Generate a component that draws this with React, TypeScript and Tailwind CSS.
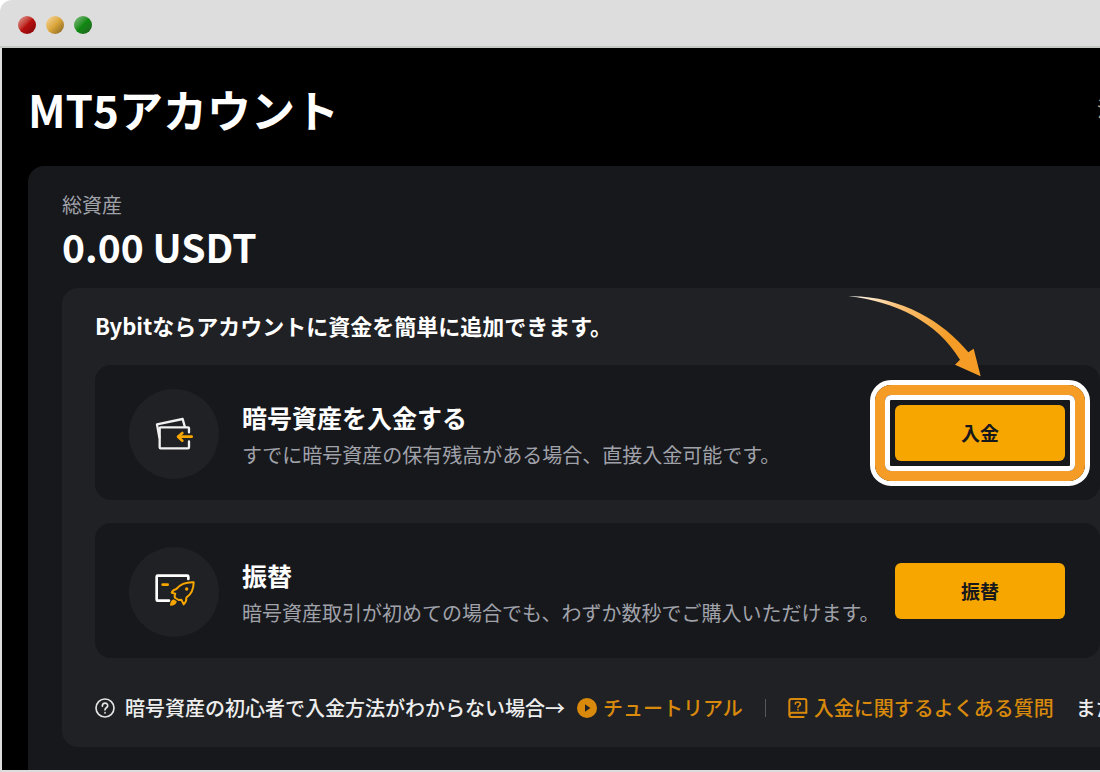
import type { ReactNode } from "react";

function WalletIcon() {
  return (
    <svg viewBox="27 27 270 270" className="size-full" fill="none" strokeLinecap="round" strokeLinejoin="round" aria-hidden="true">
      <path d="M207 157V145q0-3-3-3H122q-3 0-3 3V202q0 3 3 3H204q3 0 3-3V184" stroke="#f1f1f1" strokeWidth="7" />
      <path d="M118 172L111 133L188 117L194 139" stroke="#f1f1f1" strokeWidth="7" />
      <path d="M215 170H176" stroke="#f7a600" strokeWidth="8" />
      <path d="M187 159L174 170L187 182" stroke="#f7a600" strokeWidth="8" />
    </svg>
  );
}

function RocketIcon() {
  return (
    <svg viewBox="27 21 270 270" className="size-full" fill="none" strokeLinecap="round" strokeLinejoin="round" aria-hidden="true">
      <path d="M205 117V110q0-3-3-3H113q-3 0-3 3V179q0 3 3 3H147" stroke="#ffffff" strokeWidth="8" />
      <path d="M128 134H143" stroke="#f7a600" strokeWidth="8" />
      <path d="M221 127C199 126 180 134 169 147C161 149 157 153 155 158L166 161C163 167 163 171 166 174L176 180L184 179L191 193C197 187 200 181 199 173C214 163 221 148 221 127Z" stroke="#f7a600" strokeWidth="6" />
      <circle cx="200" cy="147" r="5" fill="#f7a600" />
      <path d="M160 180C152 184 154 188 152 195C160 195 166 191 168 185Z" fill="#f7a600" stroke="#f7a600" strokeWidth="4" />
    </svg>
  );
}

function QuestionIcon() {
  return (
    <svg viewBox="0 0 60 60" className="size-5 shrink-0" fill="none" stroke="#e4e4e4" strokeLinecap="round" aria-hidden="true">
      <circle cx="30" cy="30" r="27" strokeWidth="5" />
      <path d="M22 25C22 12 39 13 38 24C37 30 30 29 30 36" strokeWidth="5" />
      <circle cx="30" cy="44" r="1" strokeWidth="4" />
    </svg>
  );
}

function PlayIcon() {
  return (
    <svg viewBox="0 0 60 60" className="size-5 shrink-0" aria-hidden="true">
      <circle cx="30" cy="30" r="30" fill="#d98a0c" />
      <path d="M24 19L40 30L24 41Z" fill="#202124" />
    </svg>
  );
}

function BookIcon() {
  return (
    <svg viewBox="0 0 60 60" className="size-5 shrink-0" fill="none" stroke="#d98a0c" strokeWidth="6" strokeLinecap="round" strokeLinejoin="round" aria-hidden="true">
      <path d="M55 44V8q0-5-5-5H10Q4 3 4 10V50Q4 57 11 57H47" />
      <path d="M5 48Q7 44 12 44H55" />
      <path d="M22 18C22 10 37 10 37 18C37 24 30 23 30 28" strokeWidth="5" />
      <path d="M30 35V36" strokeWidth="5" />
    </svg>
  );
}

function Highlight() {
  return (
    <>
      <div className="pointer-events-none absolute -inset-[25px] rounded-[21px] border-5 border-white bg-clip-padding">
        <div className="h-full rounded-2xl border-10 border-[#f49c25]">
          <div className="h-full rounded-md border-5 border-white" />
        </div>
      </div>
      <svg viewBox="0 0 450 300" className="pointer-events-none absolute -top-[125px] -left-[55px] h-[100px] w-[150px]" aria-hidden="true">
        <defs>
          <linearGradient id="tail" gradientUnits="userSpaceOnUse" x1="25" y1="49" x2="350" y2="220">
            <stop offset="0" stopColor="#ffffff" />
            <stop offset="0.4" stopColor="#fac176" />
            <stop offset="0.9" stopColor="#f49c25" />
          </linearGradient>
        </defs>
        <path d="M25 49C180 46 310 125 385 217L401 206L422 289L345 254L360 239C290 125 165 64 25 49Z" fill="url(#tail)" />
      </svg>
    </>
  );
}

function Option({ icon, title, text, action, highlighted = false }: {
  icon: ReactNode;
  title: string;
  text: string;
  action: string;
  highlighted?: boolean;
}) {
  return (
    <section className="flex items-start rounded-2xl bg-[#17181c] pt-6 pr-[35px] pb-[21px] pl-[34px]">
      <div className="size-[90px] shrink-0 rounded-full bg-[#202124]">{icon}</div>
      <div className="mt-3 ml-[23px] min-w-0 flex-1 whitespace-nowrap">
        <h3 className="text-[25px] leading-8 font-bold text-white">{title}</h3>
        <p className="mt-1 text-xl leading-9 text-[#a0a2aa]">{text}</p>
      </div>
      <div className="relative mt-4 shrink-0">
        <button type="button" className="block h-14 w-[170px] rounded-md bg-[#f7a600] text-[19px] font-bold text-[#17181c]">
          {action}
        </button>
        {highlighted && <Highlight />}
      </div>
    </section>
  );
}

export default function App() {
  return (
    <div className="flex min-h-screen flex-col overflow-hidden bg-white font-['Noto_Sans_CJK_JP',sans-serif]">
      <header className="flex h-12 items-center gap-[10px] rounded-tl-xl border-b-2 border-[#c6c8c6] bg-[#dddddd] pt-1 pl-[18px]">
        <span className="size-[18px] rounded-full bg-linear-to-br from-[#e0a0a0] via-[#b80f0f] to-[#7c0808]" />
        <span className="size-[18px] rounded-full bg-linear-to-br from-[#fadca0] via-[#dba63a] to-[#806020]" />
        <span className="size-[18px] rounded-full bg-linear-to-br from-[#80c080] via-[#0f8a10] to-[#205f20]" />
      </header>
      <main className="flex flex-1 flex-col border-b-2 border-l-2 border-[#dddddd] bg-black pl-[26px]">
        <div className="flex items-center justify-between pt-7 pb-6">
          <h1 className="text-[44px] leading-[66px] font-bold text-white">MT5アカウント</h1>
          <a href="#orders" className="w-[3px] text-xl whitespace-nowrap text-[#b8a888]">注</a>
        </div>
        <div className="flex-1 rounded-tl-2xl bg-[#17181c] pt-6 pb-[23px] pl-[34px]">
          <p className="text-xl leading-[30px] text-[#a0a2aa]">総資産</p>
          <p className="mb-4 text-[39px] leading-13 font-bold text-white">0.00 USDT</p>
          <div className="rounded-l-2xl bg-[#202124] pt-[22px] pb-6 pl-[33px]">
            <h2 className="text-[22px] leading-[30px] font-bold text-white">Bybitならアカウントに資金を簡単に追加できます。</h2>
            <div className="mt-[25px] flex flex-col gap-[23px]">
              <Option icon={<WalletIcon />} title="暗号資産を入金する" text="すでに暗号資産の保有残高がある場合、直接入金可能です。" action="入金" highlighted />
              <Option icon={<RocketIcon />} title="振替" text="暗号資産取引が初めての場合でも、わずか数秒でご購入いただけます。" action="振替" />
            </div>
            <footer className="flex items-center overflow-hidden pt-[35px] text-xl leading-[30px] font-medium whitespace-nowrap text-[#eeeeee]">
              <QuestionIcon />
              <span className="ml-[10px]">暗号資産の初心者で入金方法がわからない場合→</span>
              <a href="#tutorial" className="ml-3 flex items-center gap-[6px] text-[#d98a0c]">
                <PlayIcon />
                チュートリアル
              </a>
              <span className="mx-[22px] h-[18px] w-px shrink-0 bg-[#55565c]" />
              <a href="#faq" className="flex items-center gap-[6px] text-[#d98a0c]">
                <BookIcon />
                入金に関するよくある質問
              </a>
              <span className="ml-[22px]">また</span>
            </footer>
          </div>
        </div>
      </main>
    </div>
  );
}
